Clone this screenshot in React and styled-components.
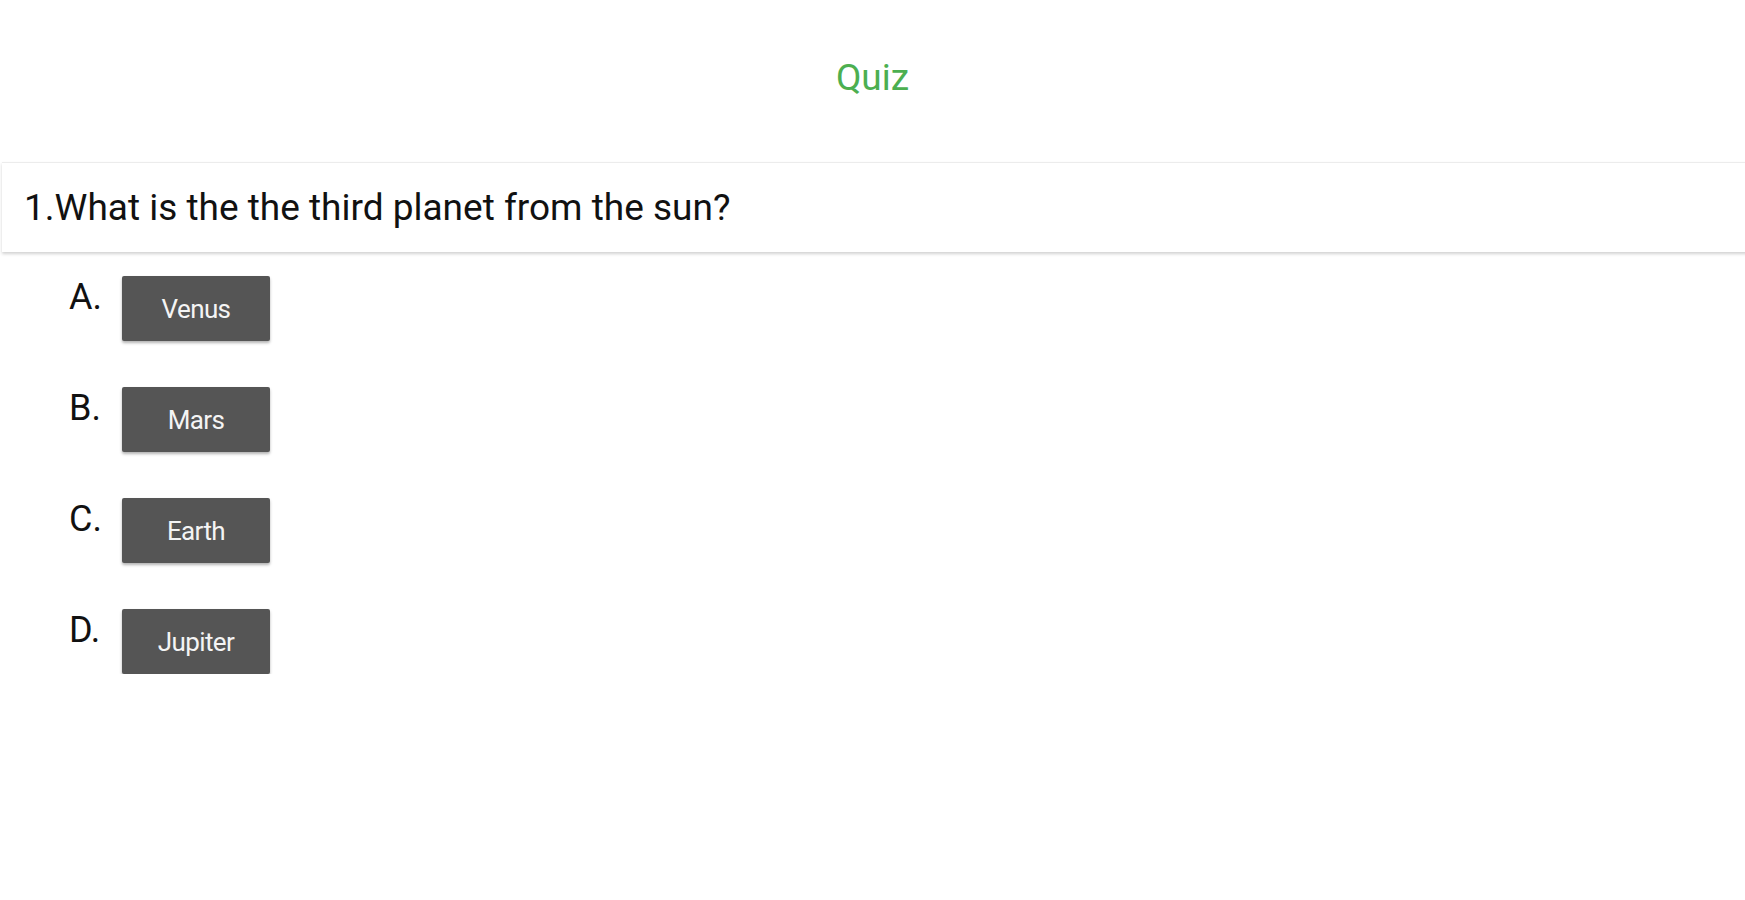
import styled, { createGlobalStyle } from "styled-components"

const GlobalStyle = createGlobalStyle`
    body {
        margin: 0;
        background: #fff;
        font-family: Roboto, "Liberation Sans", Arial, sans-serif;
        overflow-x: hidden;
    }
`

const Page = styled.div`
    display: flex;
    flex-direction: column;
    width: 1745px;
`
const Title = styled.h1`
    margin: 0;
    padding-top: 56px;
    height: 162px;
    box-sizing: border-box;
    text-align: center;
    font-size: 37px;
    font-weight: 400;
    line-height: 1.2;
    color: #4caf50;
`
const QuestionBox = styled.div`
    margin-left: 2px;
    width: 1760px;
    height: 90px;
    box-sizing: border-box;
    display: flex;
    align-items: center;
    padding-left: 22px;
    background: #fff;
    border-top: 1px solid #ececec;
    box-shadow: 0 2px 3px rgba(0, 0, 0, 0.18);
    font-size: 37px;
    color: #111;
`
const Options = styled.div`
    display: flex;
    flex-direction: column;
    gap: 46px;
    padding: 24px 0 0 69px;
`
const Option = styled.div`
    display: flex;
    align-items: flex-start;
`
const Letter = styled.span`
    width: 53px;
    font-size: 36px;
    line-height: 1;
    padding-top: 3px;
    color: #111;
`
const AnswerButton = styled.button`
    width: 148px;
    height: 65px;
    border: none;
    border-radius: 2px;
    background: #555555;
    color: #f4f4f4;
    font-family: Roboto, "Liberation Sans", Arial, sans-serif;
    font-size: 26px;
    letter-spacing: -0.6px;
    box-shadow: 0 2px 3px rgba(0, 0, 0, 0.3);
    cursor: pointer;
`

const answers = [
    { letter: "A.", text: "Venus" },
    { letter: "B.", text: "Mars" },
    { letter: "C.", text: "Earth" },
    { letter: "D.", text: "Jupiter" },
]

const App = () => {
  return (
    <Page>
        <GlobalStyle/>
        <Title>Quiz</Title>
        <QuestionBox>1.What is the the third planet from the sun?</QuestionBox>
        <Options>
            {answers.map(a => (
                <Option key={a.letter}>
                    <Letter>{a.letter}</Letter>
                    <AnswerButton>{a.text}</AnswerButton>
                </Option>
            ))}
        </Options>
    </Page>
  )
}

export default App
